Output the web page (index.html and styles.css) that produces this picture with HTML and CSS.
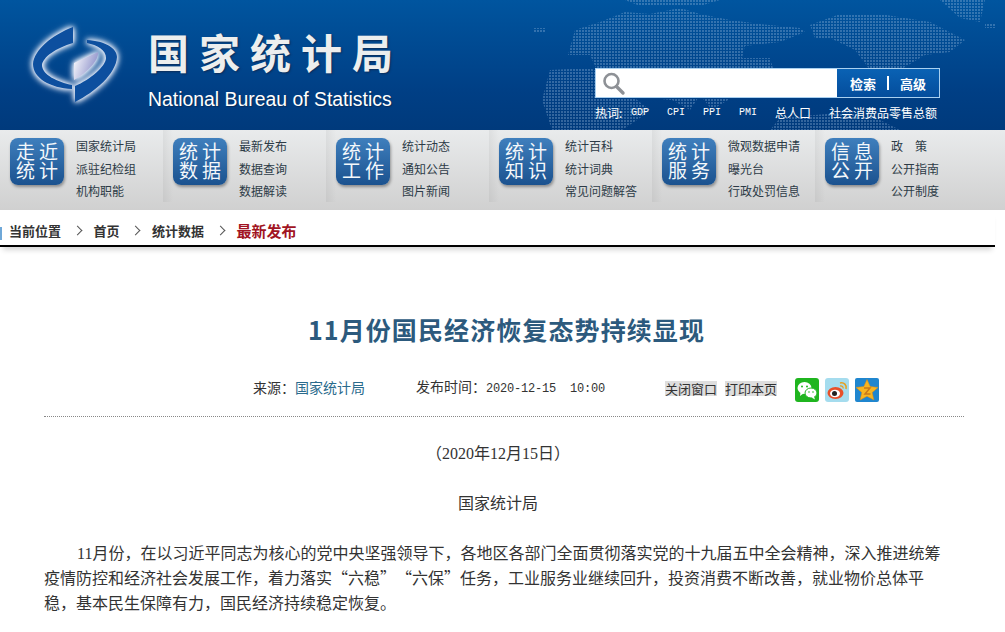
FILE: index.html
```html
<!DOCTYPE html>
<html lang="zh-CN">
<head>
<meta charset="UTF-8">
<meta name="viewport" content="width=device-width, initial-scale=1.0">
<title>11月份国民经济恢复态势持续显现</title>
<link rel="stylesheet" href="styles.css">
</head>
<body>
<div class="header">
    <svg class="world-map" width="1005" height="130" viewBox="0 0 1005 130">
        <defs>
            <pattern id="dots" width="3" height="3" patternUnits="userSpaceOnUse">
                <rect width="2" height="2" fill="#a9c6e6"/>
            </pattern>
        </defs>
        <g fill="url(#dots)" opacity="0.3">
            <path d="M575 30 L600 22 L625 12 L650 14 L680 8 L700 14 L730 20 L760 24 L800 28 L805 32 L780 42 L745 46 L742 58 L770 58 L775 75 L760 92 L748 70 L735 78 L728 100 L712 110 L700 95 L690 110 L672 100 L650 98 L640 85 L620 85 L596 68 L590 55 L568 55 Z"/>
            <path d="M550 70 L590 68 L612 78 L632 96 L650 110 L640 118 L622 130 L552 130 L542 100 Z"/>
            <path d="M810 25 L840 14 L880 14 L930 22 L965 40 L950 52 L925 55 L900 70 L880 86 L870 70 L855 50 L830 38 L815 38 Z"/>
            <path d="M780 118 L850 112 L880 120 L900 130 L770 130 Z"/>
            <path d="M625 0 L720 0 L700 6 L640 6 Z"/>
            <path d="M940 0 L985 0 L980 22 L960 18 Z"/>
            <path d="M533 28 h12 v4 h-12 Z M985 24 h10 v4 h-10 Z"/>
        </g>
    </svg>
    <div class="logo">
        <svg class="logo-mark" width="90" height="90" viewBox="28 20 94 90">
            <defs>
                <linearGradient id="inner" x1="0" y1="0" x2="1" y2="0.4">
                    <stop offset="0" stop-color="#ffffff"/>
                    <stop offset="1" stop-color="#8f93cb"/>
                </linearGradient>
            </defs>
            <path fill="#0d4f9f" d="M73 27 L73 43 C56 48 43 57 42 65 C42 75 58 82 72 85 L72 89 C50 88 33 78 33 64 C34 50 52 35 73 27 Z"/>
            <path fill="#0d4f9f" d="M87 40 C105 41 117 48 117 57 C116 74 95 92 75 102 L75 86 C90 80 106 66 106 58 C106 50 97 45 87 43 Z"/>
            <path fill="url(#inner)" d="M74 63 L98 52 C99 60 88 72 74 80 Z"/>
        </svg>
        <div class="logo-text">
            <div class="logo-cn">国家统计局</div>
            <div class="logo-en">National Bureau of Statistics</div>
        </div>
    </div>
    <div class="search-area">
        <div class="search-box">
            <div class="search-input">
                <svg width="24" height="26" viewBox="0 0 24 26">
                    <circle cx="9.5" cy="10" r="7" fill="none" stroke="#8e9196" stroke-width="2.6"/>
                    <path d="M14.5 15.5 L21 22" stroke="#8e9196" stroke-width="3.4" stroke-linecap="round"/>
                </svg>
            </div>
            <div class="search-btn"><span>检索</span><i></i><span>高级</span></div>
        </div>
        <div class="hot-words">
            <span class="hot-label">热词:</span>
            <a class="latin">GDP</a>
            <a class="latin">CPI</a>
            <a class="latin">PPI</a>
            <a class="latin">PMI</a>
            <a>总人口</a>
            <a>社会消费品零售总额</a>
        </div>
    </div>
</div>

<div class="nav-bar">
    <div class="nav-group">
        <div class="nav-badge">走近<br>统计</div>
        <ul><li>国家统计局</li><li>派驻纪检组</li><li>机构职能</li></ul>
    </div>
    <div class="nav-group">
        <div class="nav-badge">统计<br>数据</div>
        <ul><li>最新发布</li><li>数据查询</li><li>数据解读</li></ul>
    </div>
    <div class="nav-group">
        <div class="nav-badge">统计<br>工作</div>
        <ul><li>统计动态</li><li>通知公告</li><li>图片新闻</li></ul>
    </div>
    <div class="nav-group">
        <div class="nav-badge">统计<br>知识</div>
        <ul><li>统计百科</li><li>统计词典</li><li>常见问题解答</li></ul>
    </div>
    <div class="nav-group">
        <div class="nav-badge">统计<br>服务</div>
        <ul><li>微观数据申请</li><li>曝光台</li><li>行政处罚信息</li></ul>
    </div>
    <div class="nav-group">
        <div class="nav-badge">信息<br>公开</div>
        <ul><li>政&emsp;策</li><li>公开指南</li><li>公开制度</li></ul>
    </div>
</div>

<div class="crumbs">
    <span>当前位置</span><b class="arrow"></b>
    <span>首页</span><b class="arrow"></b>
    <span>统计数据</span><b class="arrow"></b>
    <span class="crumb-now">最新发布</span>
</div>

<div class="article">
    <h1 class="article-title">11月份国民经济恢复态势持续显现</h1>
    <div class="article-meta">
        <span class="source">来源：<a>国家统计局</a></span>
        <span class="pub-time">发布时间：<span class="date">2020-12-15</span><span class="date clock">10:00</span></span>
        <span class="tool">关闭窗口</span>
        <span class="tool">打印本页</span>
        <svg class="share" viewBox="0 0 24 24">
            <rect width="24" height="24" rx="3" fill="#1fb51f"/>
            <ellipse cx="9.5" cy="10" rx="7" ry="6" fill="#fff"/>
            <path d="M5.5 14 L5 18 L9 15 Z" fill="#fff"/>
            <ellipse cx="16" cy="15" rx="6" ry="5" fill="#fff" stroke="#1fb51f"/>
            <path d="M19 18.5 L20 21.5 L16.500 19.500 Z" fill="#fff"/>
            <circle cx="7" cy="8.500" r="1" fill="#1fb51f"/>
            <circle cx="12" cy="8.500" r="1" fill="#1fb51f"/>
            <circle cx="14" cy="14" r=".8" fill="#1fb51f"/>
            <circle cx="18" cy="14" r=".8" fill="#1fb51f"/>
        </svg>
        <svg class="share" viewBox="0 0 24 24">
            <rect width="24" height="24" rx="3" fill="#a5dcee"/>
            <ellipse cx="10.500" cy="15" rx="8" ry="6" fill="#e8502a"/>
            <ellipse cx="10" cy="15.500" rx="5" ry="3.800" fill="#fff"/>
            <circle cx="9.500" cy="15.500" r="2.500" fill="#222"/>
            <path d="M15 5 C19 4 22 7 21 11" fill="none" stroke="#e8a020" stroke-width="1.600"/>
            <path d="M15 8 C17 7.500 18.500 9 18 10.500" fill="none" stroke="#e8a020" stroke-width="1.300"/>
        </svg>
        <svg class="share" viewBox="0 0 24 24">
            <rect width="24" height="24" rx="2" fill="#1f86cf"/>
            <path d="M12 1.500 L15.200 8.500 L23 9.400 L17.200 14.500 L18.900 22 L12 18.200 L5.100 22 L6.800 14.500 L1 9.400 L8.800 8.500 Z" fill="#f7b520" stroke="#e08a10" stroke-width=".5"/>
            <path d="M9 10 H15 L10 16 H15.500" fill="none" stroke="#c8791a" stroke-width="1.500"/>
        </svg>
    </div>
    <p class="center"><span class="cjk">（</span>2020年12月15日<span class="cjk">）</span></p>
    <p class="center">国家统计局</p>
    <p class="indent">11月份，在以习近平同志为核心的党中央坚强领导下，各地区各部门全面贯彻落实党的十九届五中全会精神，深入推进统筹疫情防控和经济社会发展工作，着力落实<span class="cjk">“六稳”“六保”</span>任务，工业服务业继续回升，投资消费不断改善，就业物价总体平稳，基本民生保障有力，国民经济持续稳定恢复。</p>
</div>
</body>
</html>
```

FILE: styles.css
```css
html, body {
    margin: 0;
    padding: 0;
    background: #fff;
}
body {
    font-family: "Liberation Serif", "Noto Sans CJK SC", sans-serif;
    color: #333;
    overflow: hidden;
    text-spacing-trim: space-all;
}
ul {
    list-style-type: none;
    margin: 0;
    padding: 0;
}

/* header */
.header {
    position: relative;
    height: 130px;
    display: flex;
    justify-content: space-between;
    background: linear-gradient(#00559f, #003f85 70%, #003a7c);
    overflow: hidden;
}
.world-map {
    position: absolute;
    left: 0;
    top: 0;
}
.logo {
    position: relative;
    display: flex;
    padding: 20px 0 0 28px;
}
.logo-mark {
    width: 94px;
    height: 90px;
    filter: drop-shadow(0 0 3px #fff) drop-shadow(0 0 2px #dfe8ff);
}
.logo-text {
    margin-left: 26px;
    padding-top: 6px;
}
.logo-cn {
    font-family: "Noto Sans CJK SC", sans-serif;
    font-weight: 700;
    font-size: 41px;
    line-height: 50px;
    letter-spacing: 10px;
    color: #eceeee;
    text-shadow: 1px 1px 2px #0b2c58;
    white-space: nowrap;
}
.logo-en {
    font-family: "Liberation Sans", sans-serif;
    font-size: 19.400px;
    line-height: 22px;
    margin-top: 12px;
    color: #fff;
    text-shadow: 1px 1px 1px #0b2c58;
    white-space: nowrap;
}
.search-area {
    position: relative;
    width: 345px;
    margin-right: 65px;
    padding-top: 68px;
}
.search-box {
    display: flex;
    height: 30px;
    box-sizing: border-box;
    border: 1px solid #a9d0f0;
    background: #fff;
}
.search-input {
    flex: 1;
    padding: 2px 0 0 6px;
}
.search-btn {
    width: 102px;
    display: flex;
    align-items: center;
    justify-content: center;
    background: linear-gradient(#0a62b4, #044d9c);
    color: #fff;
    font-family: "Noto Sans CJK SC", sans-serif;
    font-size: 13px;
    font-weight: 700;
}
.search-btn i {
    width: 2px;
    height: 14px;
    margin: 0 11px;
    background: #fff;
}
.hot-words {
    display: flex;
    height: 30px;
    line-height: 30px;
    font-family: "Noto Sans CJK SC", sans-serif;
    font-size: 12px;
    color: #fff;
    white-space: nowrap;
}
.hot-label {
    width: 36px;
}
.hot-words a {
    margin-right: 18px;
}
.hot-words a:last-child {
    margin-right: 0;
}
.hot-words .latin {
    font-family: "Liberation Mono", monospace;
    font-size: 10px;
}

/* nav */
.nav-bar {
    height: 80px;
    display: grid;
    grid-template-columns: repeat(6, 163px);
    background: linear-gradient(#e9ebec, #d0d0d0);
}
.nav-group {
    display: flex;
    padding: 8px 0 0 10px;
    background: linear-gradient(90deg, rgba(0, 0, 0, .05), transparent) 0 0 / 10px 72px no-repeat;
}
.nav-group:first-child {
    background: none;
}
.nav-badge {
    width: 54px;
    height: 47px;
    box-sizing: border-box;
    padding: 3px 0 0 4px;
    border-radius: 8px;
    background: linear-gradient(#3f7fbd, #1b528f);
    box-shadow: 1px 2px 3px rgba(0, 0, 0, .35);
    color: #f4f8fb;
    font-family: "Noto Sans CJK SC", sans-serif;
    font-size: 19px;
    line-height: 19px;
    letter-spacing: 4px;
    text-align: center;
    white-space: nowrap;
}
.nav-group ul {
    margin: -3px 0 0 12px;
    font-family: "Noto Sans CJK SC", sans-serif;
    font-size: 12px;
    line-height: 22.700px;
    color: #2d3b47;
    white-space: nowrap;
}

/* breadcrumb */
.crumbs {
    height: 30px;
    padding: 5px 0 0 9px;
    margin-right: 10px;
    display: flex;
    align-items: center;
    border-bottom: 2px solid #000;
    background: linear-gradient(#6fa8d8, #6fa8d8) 0 17px / 2px 13px no-repeat;
    box-shadow: 0 6px 5px -3px rgba(0, 0, 0, .16);
    font-family: "Noto Sans CJK SC", sans-serif;
    font-size: 13px;
    font-weight: 700;
    color: #333;
}
.arrow {
    width: 6px;
    height: 6px;
    margin: 0 12.750px;
    border-top: 1px solid #555;
    border-right: 1px solid #555;
    transform: rotate(45deg);
}
.crumb-now {
    font-size: 15px;
    color: #a11422;
}

/* article */
.article {
    padding: 0 41px 0 44px;
    font-size: 16px;
    line-height: 25px;
}
.article-title {
    margin: 0;
    padding: 64px 0 0 5px;
    font-family: "Noto Sans CJK SC", sans-serif;
    font-size: 25px;
    line-height: 36px;
    letter-spacing: 1.100px;
    font-weight: 700;
    color: #2c5a7d;
    text-align: center;
}
.article-meta {
    display: flex;
    align-items: center;
    height: 70px;
    padding: 14px 0 0 209px;
    box-sizing: border-box;
    border-bottom: 1px dotted #888;
    font-size: 14px;
}
.source {
    width: 163px;
    white-space: nowrap;
}
.source a {
    color: #2a6a8c;
}
.pub-time {
    width: 249px;
    white-space: nowrap;
}
.date {
    font-family: "Liberation Mono", monospace;
    font-size: 12px;
    letter-spacing: -.2px;
}
.clock {
    margin-left: 14px;
}
.tool {
    margin: 0 8px 0 0;
    font-family: "Noto Sans CJK SC", sans-serif;
    font-size: 13px;
    line-height: 15px;
    background: #dedede;
}
.share {
    width: 24px;
    height: 24px;
    margin: 3px 6px 0 0;
}
.tool + .share {
    margin-left: 10px;
}
.article p {
    margin: 25px 12px 25px 0;
}
.article .article-meta + p {
    margin-top: 24px;
}
.cjk {
    font-family: "Noto Sans CJK SC", sans-serif;
    line-height: 1;
}
.center {
    text-align: center;
}
.indent {
    text-indent: 33px;
}
```
